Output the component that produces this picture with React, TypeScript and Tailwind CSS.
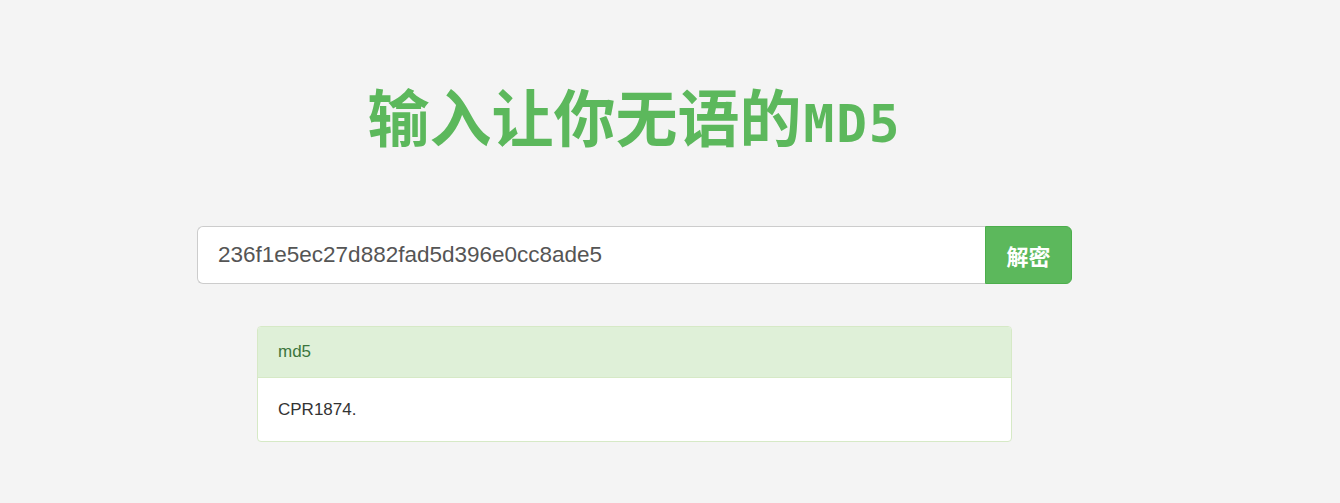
import React from "react";

export default function App() {
  return (
    <div className="min-h-[503px] w-full bg-[#f4f4f4] font-['Liberation_Sans',Arial,sans-serif]">
      <div className="ml-[197px] w-[875px] pt-[84px]">
        <h1 className="flex h-[62px] items-baseline justify-center text-[62px] leading-[62px] font-bold text-[#5cb85c] font-['Noto_Sans_CJK_SC',sans-serif]">
          <span>输入让你无语的</span>
          <span className="ml-[2px] font-['DejaVu_Sans_Mono',monospace] text-[51px] font-bold tracking-[2px]">MD5</span>
        </h1>
        <div className="mt-[80px] flex h-[58px]">
          <div className="flex flex-1 items-center rounded-l-[6px] border border-r-0 border-[#ccc] bg-white pl-[20px] text-[22.5px] text-[#555]">
            236f1e5ec27d882fad5d396e0cc8ade5
          </div>
          <button className="flex w-[87px] items-center justify-center rounded-r-[6px] border border-[#4cae4c] bg-[#5cb85c] text-[22px] font-bold text-white font-['Noto_Sans_CJK_SC',sans-serif]">
            解密
          </button>
        </div>
        <div className="mx-[60px] mt-[42px] overflow-hidden rounded-[4px] border border-[#d6e9c6] bg-white">
          <div className="flex h-[51px] items-center border-b border-[#d6e9c6] bg-[#dff0d8] px-[20px] text-[17px] text-[#3c763d]">
            md5
          </div>
          <div className="flex h-[63px] items-center px-[20px] text-[17px] text-[#333]">
            CPR1874.
          </div>
        </div>
      </div>
    </div>
  );
}
